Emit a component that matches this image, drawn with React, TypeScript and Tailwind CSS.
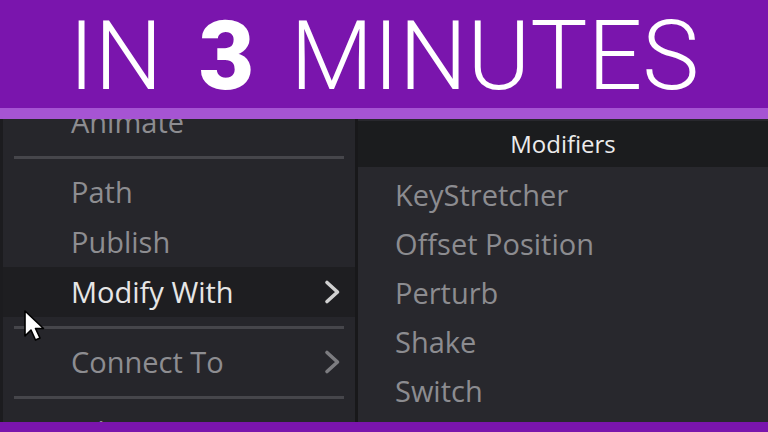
import React from 'react'

const leftItems: { label: string; type: 'item' | 'sep'; active?: boolean; sub?: boolean }[] = [
  { label: 'Animate', type: 'item' },
  { label: '', type: 'sep' },
  { label: 'Path', type: 'item' },
  { label: 'Publish', type: 'item' },
  { label: 'Modify With', type: 'item', active: true, sub: true },
  { label: '', type: 'sep' },
  { label: 'Connect To', type: 'item', sub: true },
  { label: '', type: 'sep' },
  { label: 'Edit...', type: 'item' },
]

const modifiers = ['KeyStretcher', 'Offset Position', 'Perturb', 'Shake', 'Switch']

const Chevron = ({ color }: { color: string }) => (
  <svg width="18" height="26" viewBox="0 0 18 26" fill="none">
    <path d="M4 3.5 L14.5 13 L4 22.5" stroke={color} strokeWidth="3.6" strokeLinecap="round" strokeLinejoin="round" />
  </svg>
)

const Cursor = () => (
  <svg width="24" height="34" viewBox="0 0 24 34" className="absolute left-[23px] top-[309px]">
    <path d="M2 2 L2 27 L8 21 L12.5 31 L17 29 L12.5 19.5 L20.5 19.5 Z" fill="#ffffff" stroke="#000000" strokeWidth="1.6" strokeLinejoin="round" />
  </svg>
)

export default function App() {
  return (
    <div className="relative w-[768px] h-[432px] overflow-hidden bg-[#26262b] flex flex-col" style={{ fontFamily: '"Open Sans", "Noto Sans", sans-serif' }}>
      {/* banner */}
      <div className="h-[108px] bg-[#7a15ad] flex items-center justify-center shrink-0">
        <div className="text-white text-[96px] leading-none flex items-baseline pt-[4px]" style={{ fontFamily: 'Roboto, sans-serif' }}>
          <span className="font-light">IN</span>
          <span className="font-black ml-[36px] mr-[36px]">3</span>
          <span className="font-light">MINUTES</span>
        </div>
      </div>
      <div className="h-[11px] bg-[#a654d3] shrink-0" />

      {/* menus */}
      <div className="flex flex-1 overflow-hidden">
        <div className="w-[355px] shrink-0 bg-[#26262b] border-l-[3px] border-[#1c1c1f] overflow-hidden">
          <div className="-mt-[22px]">
            {leftItems.map((it, i) =>
              it.type === 'sep' ? (
                <div key={i} className="h-[20px] flex items-center pl-[11px] pr-[11px]">
                  <div className="h-[3px] w-full bg-[#46464b]" />
                </div>
              ) : (
                <div
                  key={i}
                  className={`h-[50px] flex items-center justify-between pl-[68px] pr-[14px] ${it.active ? 'bg-[#1e1e21]' : ''}`}
                >
                  <span className={`text-[29px] leading-[50px] ${it.active ? 'text-[#e6e6e6]' : 'text-[#8d8d91]'}`}>{it.label}</span>
                  {it.sub && <Chevron color={it.active ? '#d0d0d0' : '#7c7c80'} />}
                </div>
              )
            )}
          </div>
        </div>
        <div className="w-[3px] shrink-0 bg-[#18181a]" />
        <div className="flex-1 bg-[#28282d] pt-[2px]">
          <div className="h-[46px] bg-[#1b1c1e] flex items-center justify-center">
            <span className="text-[24px] text-[#ececec]">Modifiers</span>
          </div>
          <div className="pt-[3px]">
            {modifiers.map(m => (
              <div key={m} className="h-[49px] flex items-center pl-[37px]">
                <span className="text-[29px] leading-[49px] text-[#8c8c90]">{m}</span>
              </div>
            ))}
          </div>
        </div>
      </div>

      <div className="h-[10px] bg-[#7a15ad] shrink-0" />
      <Cursor />
    </div>
  )
}
